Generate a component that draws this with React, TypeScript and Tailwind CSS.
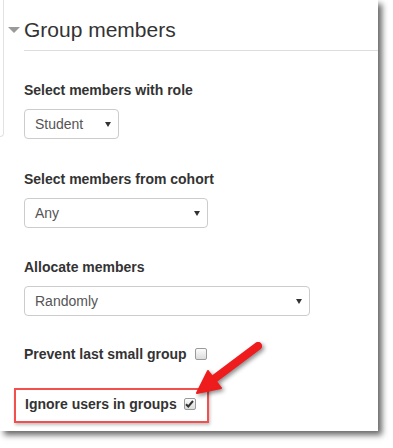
import React from "react";

const font = { fontFamily: '"Liberation Sans", Arial, sans-serif' };

function Select({ value, width }: { value: string; width: string }) {
  return (
    <div
      className={`${width} h-[30px] flex items-center justify-between pl-[10px] pr-[7px] border border-[#cccccc] rounded-[4px] bg-white text-[14px] text-[#555555]`}
    >
      <span>{value}</span>
      <svg width="6" height="5" viewBox="0 0 6 5">
        <path d="M0 0 L6 0 L3 5 Z" fill="#333333" />
      </svg>
    </div>
  );
}

function Checkbox({ checked }: { checked?: boolean }) {
  return (
    <span className="w-[12px] h-[12px] flex items-center justify-center rounded-[2px] border border-[#9a9a9a] bg-gradient-to-b from-[#fcfcfc] to-[#dcdcdc]">
      {checked && (
        <svg width="9" height="8" viewBox="0 0 9 8">
          <path d="M1 4.2 L3.3 6.5 L8 1" stroke="#333333" strokeWidth="2" fill="none" />
        </svg>
      )}
    </span>
  );
}

function Field({ label, children }: { label: string; children: React.ReactNode }) {
  return (
    <div className="flex flex-col gap-[9px]">
      <label className="text-[14px] leading-[20px] font-bold text-[#333333]">{label}</label>
      {children}
    </div>
  );
}

export default function App() {
  return (
    <div className="relative w-[393px] h-[448px] bg-white overflow-hidden" style={font}>
      <div className="w-[378px] h-[431px] bg-white shadow-[4px_4px_6px_rgba(0,0,0,0.6)] flex">
        {/* left sidebar edge */}
        <div className="w-[4px] h-[137px] border-r border-b border-[#e2e2e2] rounded-br-[4px]" />

        <div className="flex-1 ml-[4px]">
          {/* Header */}
          <div className="flex pt-[17px]">
            <div className="h-[26px] flex items-center">
              <svg width="12" height="6" viewBox="0 0 12 6">
                <path d="M0 0 L12 0 L6 6 Z" fill="#9a9a9a" />
              </svg>
            </div>
            <h2 className="flex-1 ml-[4px] pb-[7px] border-b border-[#dddddd] text-[21px] leading-[26px] text-[#333333]">
              Group members
            </h2>
          </div>

          {/* Form */}
          <div className="pl-[16px] pt-[29px] flex flex-col">
            <Field label="Select members with role">
              <Select value="Student" width="w-[95px]" />
            </Field>
            <div className="mt-[30px]">
              <Field label="Select members from cohort">
                <Select value="Any" width="w-[184px]" />
              </Field>
            </div>
            <div className="mt-[29px]">
              <Field label="Allocate members">
                <Select value="Randomly" width="w-[286px]" />
              </Field>
            </div>
            <div className="mt-[28px] flex items-center gap-[8px] text-[14px] leading-[20px] font-bold text-[#333333]">
              <span>Prevent last small group</span>
              <Checkbox />
            </div>
            <div className="mt-[24px] ml-[-10px] w-[195px] pl-[9px] pt-[4px] pb-[7px] border-2 border-[#f24f4f] shadow-[1px_2px_3px_rgba(0,0,0,0.25)] flex items-center gap-[7px] text-[14px] leading-[20px] font-bold text-[#333333]">
              <span>Ignore users in groups</span>
              <Checkbox checked />
            </div>
          </div>
        </div>
      </div>

      {/* Annotation arrow */}
      <svg
        className="absolute left-0 top-0 pointer-events-none drop-shadow-[2px_2px_2px_rgba(0,0,0,0.45)]"
        width="393"
        height="448"
        viewBox="0 0 393 448"
      >
        <line x1="258" y1="346" x2="214" y2="379" stroke="#ee1c1c" strokeWidth="8" strokeLinecap="round" />
        <path d="M197 393 L208 371 L221 388 Z" fill="#ee1c1c" stroke="#ee1c1c" strokeWidth="2" strokeLinejoin="round" />
      </svg>
    </div>
  );
}
